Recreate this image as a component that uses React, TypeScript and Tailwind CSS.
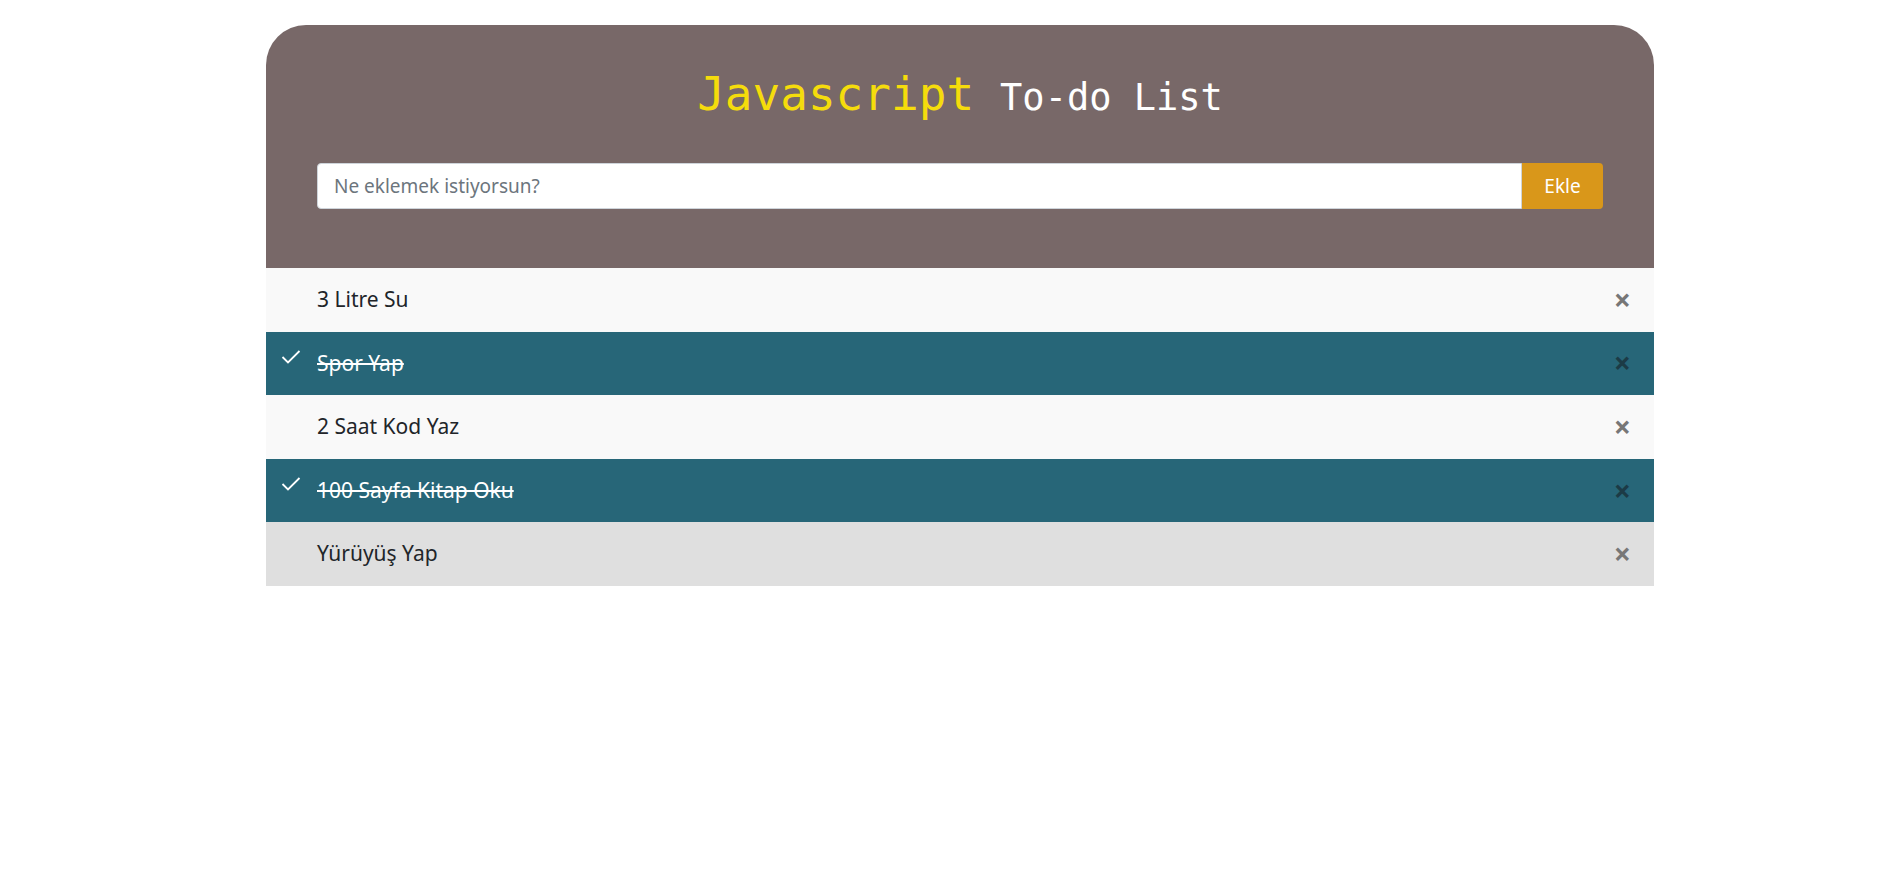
import { useState } from "react";

type Todo = { text: string; done: boolean };

const initial: Todo[] = [
  { text: "3 Litre Su", done: false },
  { text: "Spor Yap", done: true },
  { text: "2 Saat Kod Yaz", done: false },
  { text: "100 Sayfa Kitap Oku", done: true },
  { text: "Yürüyüş Yap", done: false },
];

function TodoItem({ todo, hovered }: { todo: Todo; hovered: boolean }) {
  let bg = "bg-[#f9f9f9] text-[#212529]";
  if (todo.done) bg = "bg-[#276678] text-white";
  else if (hovered) bg = "bg-[#dfdfdf] text-[#212529]";

  return (
    <li className={`relative flex items-center h-[63.6px] pl-[51px] pr-4 text-[21px] ${bg}`}>
      {todo.done && (
        <svg className="absolute left-[15px] top-[17px] w-[20px] h-[16px]" viewBox="0 0 20 16" fill="none">
          <polyline points="1.5,8 7,13.5 18.5,2" stroke="white" strokeWidth="1.8" />
        </svg>
      )}
      <span className={todo.done ? "line-through" : ""}>{todo.text}</span>
      <span className={`ml-auto mr-[7px] text-[30px] font-bold leading-none ${todo.done ? "text-[#1c3b46]" : "text-[#777]"}`}>×</span>
    </li>
  );
}

export default function App() {
  const [todos] = useState(initial);

  return (
    <div className="min-h-screen bg-white pt-[25px]" style={{ fontFamily: '"Noto Sans", sans-serif' }}>
      <div className="ml-[266px] w-[1388px]">
        <div className="bg-[#786868] rounded-t-[40px] pt-[46px] pb-[59px] px-[51px]">
          <h1 className="flex items-baseline justify-center font-['DejaVu_Sans_Mono',monospace] leading-none">
            <span className="text-[46px] text-[#f5dc0c]">Javascript</span>
            <span className="text-[37px] text-white ml-[26px]">To-do List</span>
          </h1>
          <div className="flex mt-[46px] h-[46px]">
            <input
              className="flex-1 bg-white border border-[#ced4da] rounded-l-[4px] px-[16px] text-[19px] text-[#495057] placeholder:text-[#6c757d] outline-none"
              placeholder="Ne eklemek istiyorsun?"
            />
            <button className="w-[81px] bg-[#d9971a] text-white text-[19px] rounded-r-[4px]">Ekle</button>
          </div>
        </div>
        <ul>
          {todos.map((t, i) => (
            <TodoItem key={i} todo={t} hovered={i === todos.length - 1} />
          ))}
        </ul>
      </div>
    </div>
  );
}
